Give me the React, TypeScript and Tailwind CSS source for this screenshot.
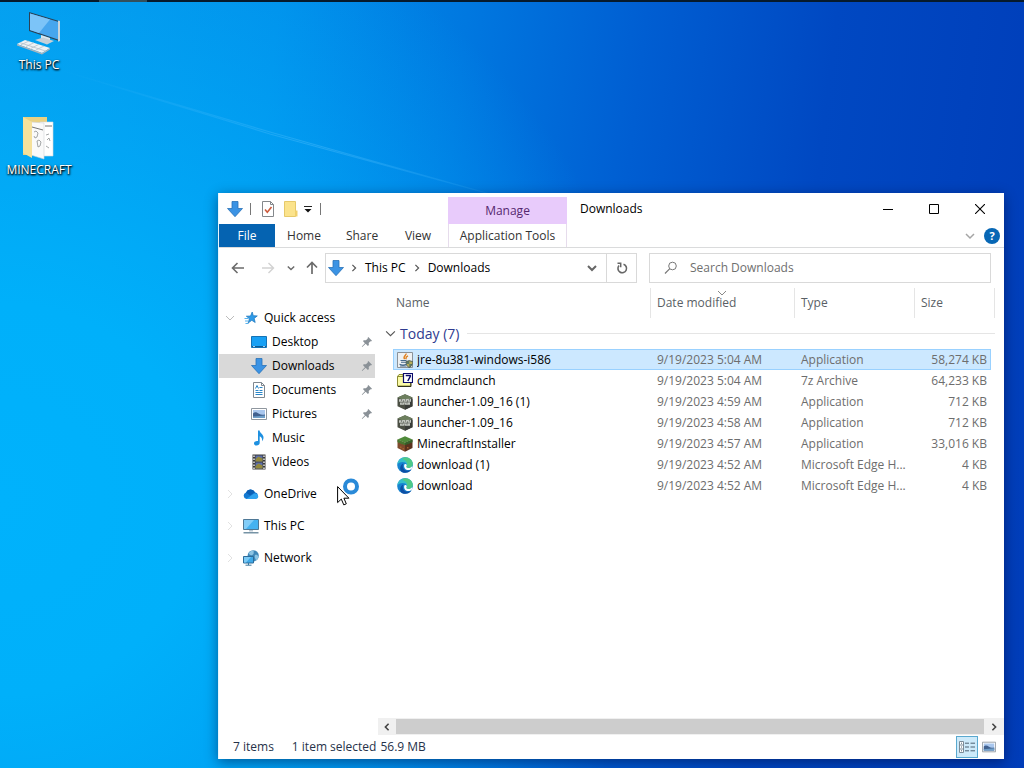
import type { ReactNode } from "react";

type IconProps = { size?: number };

function DownArrow({ size = 16 }: IconProps) {
  return (
    <svg width={size} height={size} viewBox="0 0 16 16" className="shrink-0">
      <path d="M5 .5h6v7h4.500L8 15.700.5 7.500H5z" fill="#3b93e4" stroke="#2a72b8" strokeWidth=".8" />
    </svg>
  );
}

function StarIcon() {
  return (
    <svg width="16" height="16" viewBox="0 0 16 16" className="shrink-0">
      <path d="M9.200 2l1.100 3.700 4 .2-3.100 2.500 1 4.100-3.400-2.200-3.600 2.700 1.200-4.400L3.300 6.200l4.200-.2z" fill="#2f9be8" stroke="#1b75bb" strokeWidth=".7" />
      <path d="M1.500 8.500h4M2 11h3M2.500 13.500h3" stroke="#56b2ee" strokeWidth="1.100" />
    </svg>
  );
}

function DesktopIcon() {
  return (
    <svg width="16" height="16" viewBox="0 0 16 16" className="shrink-0">
      <path d="M.5 2.500h15v11H.5z" fill="#18a0f4" stroke="#1573b5" />
      <path d="M1 12h14v1H1z" fill="#0b5b95" />
      <path d="M2 12.500h2M12 12.500h2" stroke="#cfe9fb" strokeWidth=".8" />
    </svg>
  );
}

function DocumentIcon() {
  return (
    <svg width="16" height="16" viewBox="0 0 16 16" className="shrink-0">
      <path d="M2.500.5h8l3 3v12h-11z" fill="#fff" stroke="#808890" />
      <path d="M10.500.5v3h3" fill="none" stroke="#808890" />
      <path d="M4.500 6.500L6 3.500l1.500 3M8.500 5.500h3M4.500 8.500h3M8.500 8.500h3M4.500 10.500h7M4.500 12.500h7" stroke="#2a86c8" fill="none" />
    </svg>
  );
}

function PictureIcon({ size = 16 }: IconProps) {
  return (
    <svg width={size} height={size} viewBox="0 0 16 16" className="shrink-0">
      <path d="M.5 2.500h15v11H.5z" fill="#fff" stroke="#8f979f" />
      <path d="M2 4h12v8H2z" fill="#a9c7ee" />
      <path d="M2 7.500c2-2 4-1 6 .3s4 1 6 .7V12H2z" fill="#41618f" />
      <path d="M2 10.500l12-1V12H2z" fill="#6f9fc9" />
    </svg>
  );
}

function MusicIcon() {
  return (
    <svg width="16" height="16" viewBox="0 0 16 16" className="shrink-0">
      <path d="M7 .5h1.600c.2 2.600 3.900 3.700 3.900 7 0 1.700-.8 3-1.500 3.800.5-2.800-.6-4.400-2.300-5v6.400c0 1.700-1.500 2.800-3.200 2.800-1.500 0-2.500-.9-2.500-2.100 0-1.600 1.800-2.900 4-2.400z" fill="#1e90e0" />
    </svg>
  );
}

function VideoIcon() {
  return (
    <svg width="16" height="16" viewBox="0 0 16 16" className="shrink-0">
      <path d="M1.500.5h13v15h-13z" fill="#3b3b3b" />
      <path d="M4.500 1.500h7v6h-7z" fill="#5b6da8" />
      <path d="M4.500 8.500h7v6h-7z" fill="#5d6fae" />
      <path d="M4.500 5l3-2.500 4 2v3h-7zM4.500 12l3-2.500 4 2v3h-7z" fill="#93893c" />
      <path d="M3 1.500v14M13 1.500v14" stroke="#f2f2f2" strokeWidth="1.400" strokeDasharray="1.500 1.500" />
    </svg>
  );
}

function CloudIcon() {
  return (
    <svg width="16" height="16" viewBox="0 0 16 16" className="shrink-0">
      <path d="M3.500 13A3.300 3.300 0 0 1 3 6.600 5 5 0 0 1 12 6.200a3.500 3.500 0 0 1 .5 6.800z" fill="#1479d1" />
      <path d="M3 6.600A5 5 0 0 1 12 6.200L7 9.500z" fill="#0a5fb5" />
      <path d="M3.300 13l7.400-5.200c3.500-1.600 6.300 2.900 3.300 4.800-.5.300-1 .4-1.500.4z" fill="#2ea3f0" />
    </svg>
  );
}

function ComputerIcon() {
  return (
    <svg width="16" height="16" viewBox="0 0 16 16" className="shrink-0">
      <path d="M.5 1.500h15v10H.5z" fill="#45b2f1" stroke="#4e7896" />
      <path d="M1 2h10L3 11H1z" fill="#82cdf8" />
      <path d="M6 12h4v1.500H6z" fill="#b9c7d2" />
      <path d="M.5 14.800h15" stroke="#54788e" strokeWidth="1.200" />
    </svg>
  );
}

function NetworkIcon() {
  return (
    <svg width="16" height="16" viewBox="0 0 16 16" className="shrink-0">
      <circle cx="10.200" cy="5.800" r="5.600" fill="#3f87b8" />
      <path d="M5.500 3.500C7 1 9 .4 11 .4c-1 1.800.5 2.600-1 4.100S7 5 5.500 3.500zM12 5c1.500-.5 2.500 0 3.500 1.500-.2 1.800-1 3-2.500 4-.5-2-2-3-1-5.500z" fill="#8cc4e4" />
      <path d="M.5 6.500h10v6.500H.5z" fill="#3fa9e8" stroke="#2c6b99" />
      <path d="M1 7h7l-5 5.500H1z" fill="#7ccaf5" />
      <path d="M5.500 13v2M2.500 15.200h6" stroke="#3b789d" />
    </svg>
  );
}

function PinIcon() {
  return (
    <svg width="12" height="12" viewBox="0 0 12 12" className="shrink-0">
      <path d="M7.300 1l3.700 3.700-1 .7-.6-.2-1.700 1.900.2 2-1 .9-2.200-2.200L1.200 11l-.4-.4 3.100-3.400L1.900 5.100l1-.9 2 .1 1.900-1.700-.2-.7z" fill="#8a9197" />
    </svg>
  );
}

function JavaInstallerIcon() {
  return (
    <svg width="16" height="16" viewBox="0 0 16 16" className="shrink-0">
      <path d="M.5.500h15v15H.5z" fill="#eef1f3" stroke="#8b9299" />
      <path d="M9 1.500c.8 1.800-3.600 2.800-1.400 5.700M11 3.800c-3 1.200-1.500 2-2.200 3.500" stroke="#e07f1c" strokeWidth="1.400" fill="none" />
      <path d="M3.500 8.500h6M4 10.300h5M2.500 12.300c2 .8 5 .8 7 0M3 14h6.500" stroke="#45698a" strokeWidth="1.100" fill="none" />
      <path d="M9 9.500l3.200-1 3.300 1c0 3.500-1 5-3.200 6C10 14.500 9 13 9 9.500z" fill="#5d7a62" stroke="#3c443c" strokeWidth=".6" />
      <path d="M12.300 9.200v2.900h2.800c.2-.8.200-1.500.2-2.200zM9.700 12.100h2.600v2.900c-1.500-.6-2.300-1.600-2.600-2.900z" fill="#b9ac5a" />
    </svg>
  );
}

function ArchiveIcon() {
  return (
    <svg width="16" height="16" viewBox="0 0 16 16" className="shrink-0">
      <path d="M.5 3.500l1.500-2h4v11.500H.5z" fill="#f7f7a0" stroke="#8d8d32" />
      <path d="M.5 3.500h13v9.500H.5z" fill="#fbfba8" stroke="#8d8d32" />
      <path d="M1 13.500h13V10" stroke="#33331a" fill="none" />
      <path d="M6.500.5h9v9h-9z" fill="#fff" stroke="#0a0a6b" strokeWidth="1.200" />
      <path d="M8.700 2.600h4.500v1L10.800 8" stroke="#0a0a6b" strokeWidth="1.500" fill="none" />
    </svg>
  );
}

function LauncherIcon() {
  return (
    <svg width="16" height="16" viewBox="0 0 16 16" className="shrink-0">
      <path d="M8 .3l7.500 3.200v8.700L8 15.800.5 12.200V3.500z" fill="#4b4f44" />
      <path d="M8 .3l7.500 3.200L8 6.500.5 3.500z" fill="#6d7f5e" />
      <path d="M8 8v7.800l7.500-3.600V5z" fill="#3a3d39" />
      <path d="M2 5.200l12-.4v3H2zM3 8.400l10-.2v2.600H3z" fill="#c3c7c0" />
      <path d="M4.500 5.200v1.600M6.500 6.300v1.500M8.500 5.200v1.500M10.500 6.300v1.500M12.400 5v1.500M5.200 8.400v1.200M7.500 9.500v1.300M10 8.300v1.400" stroke="#5b6058" strokeWidth=".8" />
    </svg>
  );
}

function GrassBlockIcon() {
  return (
    <svg width="16" height="16" viewBox="0 0 16 16" className="shrink-0">
      <path d="M.5 3.500L8 6.800v9L.5 12z" fill="#7f4a2c" />
      <path d="M15.500 3.500L8 6.800v9l7.500-3.800z" fill="#5b321e" />
      <path d="M8 .3l7.500 3.200L8 6.800.5 3.500z" fill="#4f8a3a" />
      <path d="M.5 3.500L8 6.800v2.500l-1.500-1v1L5 7.500v1.300L3.500 7v1L2 6.300v1L.5 6z" fill="#47772f" />
      <path d="M15.500 3.500L8 6.800v2.500l1.500-1v1L11 7.500v1.300L12.500 7v1L14 6.300v1l1.500-1.300z" fill="#36602a" />
      <path d="M3 10.500h1.500V12H3zM5.500 12H7v1.500H5.500zM10 11h1.500v1.500H10z" fill="#a5602f" />
    </svg>
  );
}

function EdgeIcon() {
  return (
    <svg width="16" height="16" viewBox="0 0 16 16" className="shrink-0">
      <circle cx="8" cy="8" r="7.800" fill="#1683d0" />
      <path d="M.3 7.500C.8 3 4 .2 8.200.2c4.500 0 7.600 3.200 7.600 6.600 0 2.500-1.900 4.200-4.300 4.200-1.800 0-2.600-.8-2.200-1.500.6-.8.700-1.500.4-2.400C8.900 4.900 3.500 3.600.3 7.500z" fill="#35bfcb" />
      <path d="M8.200.2c4.500 0 7.600 3.200 7.600 6.600 0 2.500-1.900 4.200-4.300 4.200-1.800 0-2.600-.8-2.200-1.500C11.500 6.500 9.500 3 5 2c1-1 2-1.800 3.200-1.800z" fill="#58cc72" opacity=".75" />
      <path d="M6.300 6.400c-1.700 3.400.7 7.400 4.700 7.300 1.400 0 2.600-.5 3.600-1.200-1.400 2.100-3.800 3.400-6.600 3.300-3.900-.1-5.300-3.200-4.700-5.600.4-1.800 1.500-3.200 3-3.800z" fill="#0d4fa5" />
      <path d="M7.600 7.200C9 6.500 9.900 7.500 9.700 8.500c-.1.600-.6.800-.4 1.400.3.700 1.300 1.100 2.200 1.100 1.500 0 2.800-.7 3.600-1.800l.3 1.800c-1.500 2.300-6.400 3.500-8-.5-.5-1.400-.3-2.600.2-3.300z" fill="#fff" />
    </svg>
  );
}

function Chevron({ dir, className, w = 1.5, size = 10 }: { dir: "down" | "right" | "left"; className?: string; w?: number; size?: number }) {
  const paths = { down: "M1 3l4 4 4-4", right: "M3 1l4 4-4 4", left: "M7 1L3 5l4 4" };
  return (
    <svg width={size} height={size} viewBox="0 0 10 10" className={className}>
      <path d={paths[dir]} fill="none" stroke="currentColor" strokeWidth={w} />
    </svg>
  );
}

const pinned: { label: string; icon: ReactNode; pin?: boolean; active?: boolean }[] = [
  { label: "Desktop", icon: <DesktopIcon />, pin: true },
  { label: "Downloads", icon: <DownArrow />, pin: true, active: true },
  { label: "Documents", icon: <DocumentIcon />, pin: true },
  { label: "Pictures", icon: <PictureIcon />, pin: true },
  { label: "Music", icon: <MusicIcon /> },
  { label: "Videos", icon: <VideoIcon /> },
];

const roots: { label: string; icon: ReactNode }[] = [
  { label: "OneDrive", icon: <CloudIcon /> },
  { label: "This PC", icon: <ComputerIcon /> },
  { label: "Network", icon: <NetworkIcon /> },
];

const files: { name: string; date: string; type: string; size: string; icon: ReactNode }[] = [
  { name: "jre-8u381-windows-i586", date: "9/19/2023 5:04 AM", type: "Application", size: "58,274 KB", icon: <JavaInstallerIcon /> },
  { name: "cmdmclaunch", date: "9/19/2023 5:04 AM", type: "7z Archive", size: "64,233 KB", icon: <ArchiveIcon /> },
  { name: "launcher-1.09_16 (1)", date: "9/19/2023 4:59 AM", type: "Application", size: "712 KB", icon: <LauncherIcon /> },
  { name: "launcher-1.09_16", date: "9/19/2023 4:58 AM", type: "Application", size: "712 KB", icon: <LauncherIcon /> },
  { name: "MinecraftInstaller", date: "9/19/2023 4:57 AM", type: "Application", size: "33,016 KB", icon: <GrassBlockIcon /> },
  { name: "download (1)", date: "9/19/2023 4:52 AM", type: "Microsoft Edge H...", size: "4 KB", icon: <EdgeIcon /> },
  { name: "download", date: "9/19/2023 4:52 AM", type: "Microsoft Edge H...", size: "4 KB", icon: <EdgeIcon /> },
];

function DesktopShortcuts() {
  const label = "text-white [text-shadow:0_1px_2px_#000,1px_1px_2px_#000]";
  return (
    <div className="flex w-[78px] flex-col gap-10 pt-1.5">
      <button className="flex h-[65px] flex-col items-center justify-between">
        <svg width="48" height="48" viewBox="0 0 48 48">
          <path d="M14 4l30 9v20L14 23z" fill="#2b4256" />
          <path d="M43 12.500l2 .5v20l-2 .8z" fill="#c9d4dc" />
          <path d="M15 5.500l28 8.300v17.700L15 22z" fill="#47a6ee" />
          <path d="M15 5.500l20 6L24 25l-9-3z" fill="#7cc4f8" />
          <path d="M26 27l9 3v3l-9-2z" fill="#dfe6eb" />
          <path d="M20 32l8-2.500 11 3.500-7 3.500z" fill="#c6d0d8" />
          <path d="M2 36l8-4 25 8-8 5z" fill="#eef2f5" />
          <path d="M2 36l25 9v1.500L2 37.500zM27 45l8-5v1.500l-8 5z" fill="#a9b4bd" />
          <path d="M6 36.800l8-3.800M11 38.500l8-3.800M16 40.300l8-4M21 42l8-4M5 34.700l26 8.500" stroke="#b5c0c9" strokeWidth=".8" />
        </svg>
        <span className={label}>This PC</span>
      </button>
      <button className="flex h-[65px] flex-col items-center justify-between">
        <svg width="48" height="48" viewBox="0 0 48 48">
          <path d="M8 4h24v38H8z" fill="#e9d183" />
          <path d="M25 9h13v34H25z" fill="#fff" stroke="#d5d9dc" strokeWidth=".6" />
          <path d="M16 9l13 1v36l-13-4z" fill="#fafafa" stroke="#d1d4d6" strokeWidth=".6" />
          <path d="M17 14l11 3M30 13h7" stroke="#666" strokeWidth=".9" />
          <path d="M19 19l2-1 2 2-1 4-2 1-1-2M22 28l2-1 2 2-1 4-2 1zM31 22l3-1M32 27l2-2 1 3M31 33l3 2" stroke="#8d9092" fill="none" strokeWidth=".8" />
          <path d="M8 4l9 5v36L8 40z" fill="#f6e19b" />
        </svg>
        <span className={label}>MINECRAFT</span>
      </button>
    </div>
  );
}

function TitleAndRibbon() {
  return (
    <header className="flex h-[55px] shrink-0 border-b border-[#dadbdc]">
      <div className="flex w-[229px] flex-col">
        <div className="flex h-[31px] items-center pl-2">
          <DownArrow />
          <span className="ml-[7px] h-3 w-px bg-[#777]" />
          <button aria-label="Properties" className="ml-[9px]">
            <svg width="16" height="16" viewBox="0 0 16 16">
              <path d="M2.500.5h8l3 3v12h-11z" fill="#fff" stroke="#84888c" />
              <path d="M10.500.5v3h3" fill="none" stroke="#84888c" />
              <path d="M5 8.500l2.300 2.700L11.500 6" fill="none" stroke="#cc5a3c" strokeWidth="1.600" />
            </svg>
          </button>
          <button aria-label="New folder" className="ml-[7px]">
            <svg width="16" height="16" viewBox="0 0 16 16">
              <path d="M1.500.5h11v15h-11z" fill="#fbe38c" stroke="#e6c96a" />
              <path d="M12 9.500h2.500v6H12z" fill="#f0d06c" />
            </svg>
          </button>
          <button aria-label="Customize toolbar" className="ml-[5px]">
            <svg width="8" height="8" viewBox="0 0 8 8">
              <path d="M0 1.500h8" stroke="#222" />
              <path d="M.5 4h7L4 7.500z" fill="#111" />
            </svg>
          </button>
          <span className="ml-2 h-3 w-px bg-[#777]" />
        </div>
        <nav className="flex h-[23px] text-[#333]">
          <button className="w-14 bg-[#0563b1] text-white">File</button>
          <button className="w-[58px]">Home</button>
          <button className="w-[58px]">Share</button>
          <button className="w-[54px]">View</button>
        </nav>
      </div>
      <div className="flex w-[119px] flex-col pt-1">
        <div className="flex h-[27px] items-center justify-center bg-[#e8cbfb] text-[#55286f]">Manage</div>
        <button className="h-[23px] border-x border-[#e6dcec] text-[#333]">Application Tools</button>
      </div>
      <div className="flex flex-1 flex-col">
        <div className="flex h-[31px] items-center justify-between pl-[13px]">
          <h1 className="text-black">Downloads</h1>
          <div className="flex h-full pr-px">
            <button aria-label="Minimize" className="flex w-[46px] items-center justify-center">
              <svg width="10" height="10" viewBox="0 0 10 10"><path d="M0 5.500h10" stroke="#000" /></svg>
            </button>
            <button aria-label="Maximize" className="flex w-[46px] items-center justify-center">
              <svg width="10" height="10" viewBox="0 0 10 10"><path d="M.5.500h9v9h-9z" fill="none" stroke="#000" /></svg>
            </button>
            <button aria-label="Close" className="flex w-[46px] items-center justify-center">
              <svg width="10" height="10" viewBox="0 0 10 10"><path d="M0 0l10 10M10 0L0 10" stroke="#000" strokeWidth="1.100" /></svg>
            </button>
          </div>
        </div>
        <div className="flex h-[23px] items-center justify-end gap-2 pr-1 text-[#a5a5a5]">
          <button aria-label="Expand ribbon" className="p-px"><Chevron dir="down" /></button>
          <button aria-label="Help" className="flex size-4 items-center justify-center rounded-full bg-[#0767b5] text-[11px] font-bold text-white">?</button>
        </div>
      </div>
    </header>
  );
}

function AddressRow() {
  return (
    <div className="flex h-10 shrink-0 items-start pr-[13px] pt-[5px]">
      <div className="flex h-[30px] w-[106px] shrink-0 items-center pl-3 text-[#6b6b6b]">
        <button aria-label="Back">
          <svg width="14" height="12" viewBox="0 0 14 12"><path d="M6.500 1L1.500 6l5 5M1.500 6H13" fill="none" stroke="currentColor" strokeWidth="1.600" /></svg>
        </button>
        <button aria-label="Forward" className="ml-4 text-[#d2d2d2]">
          <svg width="14" height="12" viewBox="0 0 14 12"><path d="M7.500 1l5 5-5 5M12.500 6H1" fill="none" stroke="currentColor" strokeWidth="1.400" /></svg>
        </button>
        <button aria-label="Recent locations" className="ml-3"><Chevron dir="down" size={8} w={1.8} /></button>
        <button aria-label="Up" className="ml-[11px]">
          <svg width="12" height="14" viewBox="0 0 12 14"><path d="M1 6.500l5-5 5 5M6 1.500V13" fill="none" stroke="currentColor" strokeWidth="1.700" /></svg>
        </button>
      </div>
      <div className="flex h-[30px] flex-1 items-center border border-[#d9d9d9] text-black">
        <div className="flex flex-1 items-center pl-[2px]">
          <DownArrow />
          <Chevron dir="right" className="ml-1.5 text-[#555]" size={8} />
          <a href="#this-pc" className="ml-[7px]">This PC</a>
          <Chevron dir="right" className="ml-[7px] text-[#555]" size={8} />
          <a href="#downloads" className="ml-[7px]">Downloads</a>
        </div>
        <button aria-label="Previous locations" className="mr-[9px] text-[#666]"><Chevron dir="down" w={2} /></button>
        <button aria-label="Refresh" className="flex h-full w-[30px] items-center justify-center border-l border-[#d9d9d9] text-[#666]">
          <svg width="12" height="12" viewBox="0 0 12 12">
            <path d="M7.500 2.300A4.300 4.300 0 1 1 3 3.600" fill="none" stroke="currentColor" strokeWidth="1.600" />
            <path d="M1.500 1.200h3.200v4" fill="none" stroke="currentColor" strokeWidth="1.500" />
          </svg>
        </button>
      </div>
      <label className="ml-3 flex h-[30px] w-[342px] items-center border border-[#d9d9d9] pl-3.5">
        <svg width="14" height="14" viewBox="0 0 14 14" className="text-[#777]">
          <circle cx="8.500" cy="5" r="3.800" fill="none" stroke="currentColor" />
          <path d="M5.800 7.700L1 12.500" stroke="currentColor" strokeWidth="1.200" />
        </svg>
        <input type="text" aria-label="Search Downloads" placeholder="Search Downloads" className="ml-3 min-w-0 flex-1 outline-none placeholder:text-[#6f6f6f]" />
      </label>
    </div>
  );
}

function NavigationPane() {
  return (
    <nav className="w-[159px] shrink-0 pt-[18px] text-black">
      <a href="#quick" className="flex h-6 items-center pl-1.5">
        <Chevron dir="down" className="mr-2 text-[#bbb]" w={1} />
        <StarIcon />
        <span className="ml-[5px]">Quick access</span>
      </a>
      {pinned.map((item) => (
        <a
          key={item.label}
          href={"#" + item.label.toLowerCase()}
          className={"mr-[3px] flex h-6 items-center gap-[5px] pl-8 pr-[2px] " + (item.active ? "bg-[#d9d9d9]" : "")}
        >
          {item.icon}
          <span className="flex-1">{item.label}</span>
          {item.pin && <PinIcon />}
        </a>
      ))}
      {roots.map((item) => (
        <a key={item.label} href={"#" + item.label.toLowerCase()} className="mt-2 flex h-6 items-center pl-1.5">
          <Chevron dir="right" className="mr-2 text-[#e2e2e2]" w={1} />
          {item.icon}
          <span className="ml-[5px]">{item.label}</span>
        </a>
      ))}
    </nav>
  );
}

function FileTable() {
  const head = "border-l border-[#e5e5e5] p-0 pl-1.5 font-normal";
  return (
    <table className="w-full table-fixed border-separate border-spacing-0 text-left">
      <colgroup>
        <col className="w-[15px]" />
        <col />
        <col className="w-36" />
        <col className="w-[120px]" />
        <col className="w-[77px]" />
        <col className="w-1" />
      </colgroup>
      <thead className="text-[#5a5f66]">
        <tr className="h-[30px]">
          <th colSpan={2} className="p-0 pl-[18px] font-normal">Name</th>
          <th className={"relative " + head}>
            Date modified
            <Chevron dir="down" w={1} className="absolute left-1/2 top-0 -translate-x-1/2 text-[#888]" />
          </th>
          <th className={head}>Type</th>
          <th colSpan={2} className={"border-r " + head}>Size</th>
        </tr>
      </thead>
      <tbody className="text-[#6d6d6d]">
        <tr className="h-[31px]">
          <th colSpan={6} className="p-0 pl-[7px] font-normal">
            <div className="flex items-center">
              <Chevron dir="down" w={1} size={11} className="text-[#555]" />
              <span className="ml-1 text-sm text-[#2f3b8f]">Today (7)</span>
              <span className="ml-2 h-px flex-1 bg-[#e5e5e5]" />
            </div>
          </th>
        </tr>
        {files.map((file, i) => {
          const cell = i === 0 ? "border-y border-[#99d1ff] bg-[#cce8ff] p-0" : "border-y border-transparent p-0";
          return (
            <tr key={file.name} className="h-[21px]">
              <td className="p-0" />
              <td className={cell + " border-l"}>
                <div className="flex items-center gap-1 pl-[3px] text-black">
                  {file.icon}
                  <span className="truncate">{file.name}</span>
                </div>
              </td>
              <td className={cell + " whitespace-nowrap"}><span className="pl-[7px]">{file.date}</span></td>
              <td className={cell + " whitespace-nowrap"}><span className="pl-[7px]">{file.type}</span></td>
              <td className={cell + " whitespace-nowrap border-r text-right"}><span className="pr-[3px]">{file.size}</span></td>
              <td className="p-0" />
            </tr>
          );
        })}
      </tbody>
    </table>
  );
}

function StatusBar() {
  return (
    <footer className="flex h-6 shrink-0 items-center pl-3.5 pr-2 text-[#26324a]">
      <span>7 items</span>
      <span className="ml-[18px]">1 item selected</span>
      <span className="ml-1 flex-1">56.9 MB</span>
      <button aria-label="Details view" className="flex h-[22px] w-[22px] items-center justify-center border border-[#5aa9cf] bg-[#cdeafa]">
        <svg width="16" height="14" viewBox="0 0 16 14">
          <path d="M.5 1.500h4v11h-4zM.5 5h4M.5 9h4" fill="#fff" stroke="#7b8b97" />
          <path d="M2 3.200h1M2 7h1M2 10.800h1M6 3.200h4M11.500 3.200H16M6 7h4M11.500 7H16M6 10.800h4M11.500 10.800H16" stroke="#4e6272" />
        </svg>
      </button>
      <button aria-label="Large icons view" className="ml-1"><PictureIcon size={14} /></button>
    </footer>
  );
}

function BusyCursor() {
  return (
    <svg width="24" height="30" viewBox="0 0 24 30" className="pointer-events-none absolute left-[337px] top-[477px]">
      <circle cx="14" cy="9.500" r="6" fill="#fff" stroke="#2a8ad8" strokeWidth="4" />
      <path d="M.6 9.600v16l3.700-3.500 2.500 5.800 2.500-1.100-2.400-5.600h5z" fill="#fff" stroke="#000" />
    </svg>
  );
}

function WallpaperBeam() {
  return (
    <svg width="520" height="200" viewBox="0 0 520 200" className="pointer-events-none absolute left-0 top-0">
      <defs>
        <linearGradient id="beam" x1="0" x2="1">
          <stop offset="0" stopColor="#5cc4ff" stopOpacity="0" />
          <stop offset=".6" stopColor="#5cc4ff" stopOpacity=".35" />
          <stop offset="1" stopColor="#5cc4ff" stopOpacity=".1" />
        </linearGradient>
      </defs>
      <path d="M60 70L270 132l220 62-220-60z" fill="none" stroke="url(#beam)" strokeWidth="1.200" />
    </svg>
  );
}

export default function App() {
  return (
    <div className="relative min-h-screen overflow-hidden bg-[radial-gradient(ellipse_65%_85%_at_0%_65%,#00b2fc_0%,#00b0fa_30%,transparent_100%),linear-gradient(97deg,#0798ea_0%,#018eea_25%,#0078e0_42%,#005ed2_58%,#0048c2_75%,#003cb8_100%)] text-xs leading-4 [font-family:'Open_Sans','Noto_Sans',sans-serif]">
      <div className="flex h-0.5 bg-[#061a2c]"><span className="ml-[99px] w-12 bg-[#33505c]" /></div>
      <WallpaperBeam />
      <DesktopShortcuts />
      <main className="absolute bottom-[9px] left-[218px] right-5 top-[193px] flex flex-col border-l border-[#e9f5fc] bg-white shadow-[0_3px_12px_rgba(0,0,40,0.45)]">
        <TitleAndRibbon />
        <AddressRow />
        <div className="flex min-h-0 flex-1">
          <NavigationPane />
          <section className="flex min-w-0 flex-1 flex-col">
            <div className="flex-1 pr-[9px]"><FileTable /></div>
            <div className="flex h-[17px] items-center bg-[#f0f0f0] text-[#444]">
              <button aria-label="Scroll left" className="flex w-[18px] justify-center"><Chevron dir="left" w={2} size={8} /></button>
              <div className="h-[15px] flex-1 bg-[#cdcdcd]" />
              <button aria-label="Scroll right" className="flex w-5 justify-center"><Chevron dir="right" w={2} size={8} /></button>
            </div>
          </section>
        </div>
        <StatusBar />
      </main>
      <BusyCursor />
    </div>
  );
}
